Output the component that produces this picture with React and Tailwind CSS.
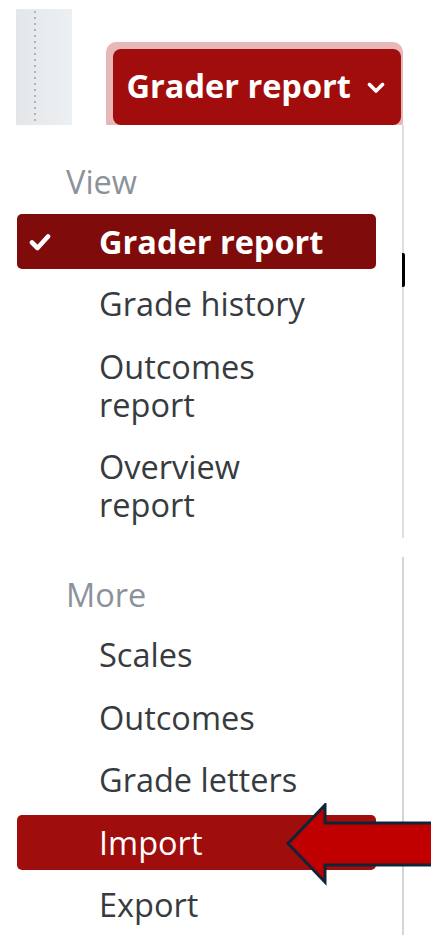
import React from "react";

const viewItems = [
  { label: "Grader report", current: true },
  { label: "Grade history" },
  { label: ["Outcomes", "report"] },
  { label: ["Overview", "report"] },
];

const moreItems = [
  { label: "Scales" },
  { label: "Outcomes" },
  { label: "Grade letters" },
  { label: "Import", hover: true },
  { label: "Export" },
];

const Check = () => (
  <svg width="22" height="18" viewBox="0 0 22 18">
    <polyline points="3,9.5 8.5,15 19,3.5" fill="none" stroke="white" strokeWidth="4.6" strokeLinecap="round" strokeLinejoin="round" />
  </svg>
);

const MenuItem = ({ label, current, hover }) => {
  let cls = "relative rounded-[5px] py-[8.5px] pl-[82px] pr-4 leading-[38px] text-[#373b40]";
  if (current) cls = "relative rounded-[5px] py-[8.5px] pl-[82px] pr-4 leading-[38px] bg-[#800b0b] text-white font-bold";
  if (hover) cls = "relative rounded-[5px] py-[8.5px] pl-[82px] pr-4 leading-[38px] bg-[#a00d0d] text-white";

  const lines = Array.isArray(label) ? label : [label];

  return (
    <div className={cls}>
      {current && (
        <span className="absolute left-[12px] top-0 bottom-0 flex items-center">
          <Check />
        </span>
      )}
      {lines.map((l) => (
        <div key={l}>{l}</div>
      ))}
    </div>
  );
};

const Arrow = () => (
  <svg
    className="absolute left-[286px] top-[803px] z-20"
    width="150"
    height="84"
    viewBox="0 0 150 84"
  >
    <path
      d="M2 40.5 L39 2 L39 20 L152 20 L152 62 L39 62 L39 79 Z"
      fill="#c00000"
      stroke="#0f2537"
      strokeWidth="3"
      strokeLinejoin="miter"
    />
  </svg>
);

export default function App() {
  return (
    <div className="relative w-[431px] h-[935px] overflow-hidden bg-white font-['Open_Sans',sans-serif] text-[32.5px]">
      {/* top bar: page strip + dropdown toggle */}
      <div className="relative flex h-[125px] overflow-hidden">
        <div className="ml-[16px] mt-[9px] h-[140px] w-[56px] bg-[linear-gradient(to_right,#e3e7ea,#edf0f2)] pl-[18px]">
          <div className="h-full w-[2px] bg-[repeating-linear-gradient(to_bottom,transparent_0_2px,#b3b5b7_2px_4px,transparent_4px_6px)]" />
        </div>
        <div className="ml-[34px] mt-[42px] h-[90px] w-[297px] rounded-[10px] bg-[#e8b7b8] pl-[6.5px] pt-[6.5px] pr-[2px]">
          <div className="flex h-[76px] items-center rounded-[8px] bg-[#a10d0d] pl-[14px] text-white font-bold leading-none">
            <span className="mt-[-1px]">Grader report</span>
            <svg className="ml-[16px] mt-[2px]" width="18" height="12" viewBox="0 0 18 12">
              <polyline points="2.5,2.5 9,9 15.5,2.5" fill="none" stroke="white" strokeWidth="3.6" strokeLinecap="round" strokeLinejoin="round" />
            </svg>
          </div>
        </div>
      </div>

      <div className="flex">
        {/* dropdown menu */}
        <div className="relative z-10 w-[402px] bg-white pt-[38px] pl-[17px] pr-[26px]">
          <div className="mb-[13px] pl-[49px] leading-[38px] text-[#8b929a]">View</div>
          <div className="flex flex-col gap-[7.5px]">
            {viewItems.map((it, i) => (
              <MenuItem key={i} {...it} />
            ))}
          </div>

          <div className="mt-[43.5px] mb-[13.5px] pl-[49px] leading-[38px] text-[#8b929a]">More</div>
          <div className="flex flex-col gap-[7.5px]">
            {moreItems.map((it, i) => (
              <MenuItem key={i} {...it} />
            ))}
          </div>
        </div>

        {/* page content behind the menu */}
        <div className="flex flex-1 flex-col">
          <div className="h-[128px] w-[2px] bg-[#dedfe0]" />
          <div className="h-[34px] w-[3px] rounded-r-[2px] bg-black" />
          <div className="h-[251px] w-[2px] bg-[#dedfe0]" />
          <div className="h-[19px]" />
          <div className="h-[400px] w-[2px] bg-[#d3d6d9]" />
        </div>
      </div>

      <Arrow />
    </div>
  );
}
